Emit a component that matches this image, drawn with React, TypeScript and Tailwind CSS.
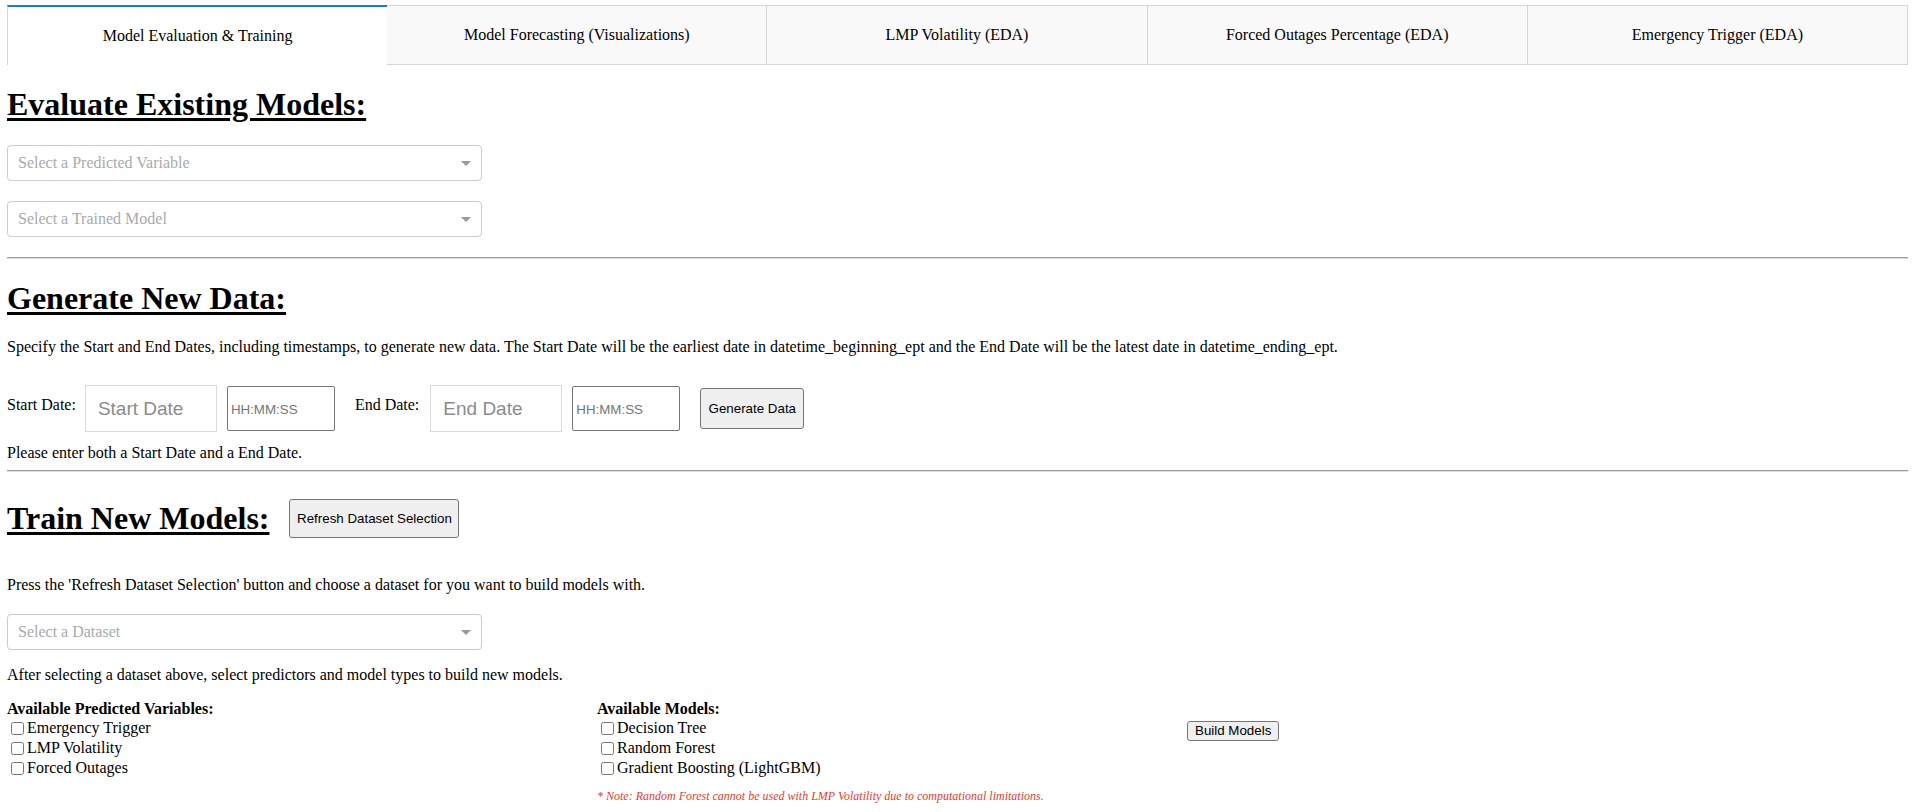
import React, { useState } from 'react';

const tabs = [
  'Model Evaluation & Training',
  'Model Forecasting (Visualizations)',
  'LMP Volatility (EDA)',
  'Forced Outages Percentage (EDA)',
  'Emergency Trigger (EDA)',
];

const serif = { fontFamily: '"Liberation Serif", "Times New Roman", serif' };
const sans = { fontFamily: '"Liberation Sans", Arial, sans-serif' };

const Dropdown = ({ placeholder, className }: { placeholder: string; className: string }) => (
  <div
    className={`w-[475px] h-9 flex items-center border border-[#ccc] rounded-[4px] bg-white ${className}`}
  >
    <span className="flex-grow pl-[10px] text-[16px] leading-[18px] text-[#aaa]">{placeholder}</span>
    <span className="w-[25px] pr-[5px] flex justify-center">
      <span className="w-0 h-0 border-x-[5px] border-x-transparent border-t-[5px] border-t-[#999]" />
    </span>
  </div>
);

const Divider = ({ className }: { className: string }) => (
  <hr className={`h-0 border-t border-b border-t-[#9a9a9a] border-b-[#e0e0e0] ${className}`} />
);

const Check = ({ label }: { label: string }) => (
  <label className="flex items-center h-5 text-[16px] leading-[18px]">
    <input type="checkbox" className="w-[13px] h-[13px] ml-[4px] mr-[3px] my-[3px]" />
    {label}
  </label>
);

const App = () => {
  const [active, setActive] = useState(0);

  return (
    <div className="min-h-screen bg-white text-black px-[7px] pt-[5px]" style={serif}>
      <div className="flex h-[60px]">
        {tabs.map((t, i) => (
          <button
            key={t}
            onClick={() => setActive(i)}
            className={
              i === active
                ? 'flex-1 flex items-center justify-center bg-white border-l border-l-[#d6d6d6] border-t-2 border-t-[#1975fa] text-[16px]'
                : 'flex-1 flex items-center justify-center bg-[#f9f9f9] border border-[#d6d6d6] border-l-0 first:border-l text-[16px]'
            }
            style={serif}
          >
            {t}
          </button>
        ))}
      </div>

      <h1 className="mt-[21px] text-[32px] leading-[37px] font-bold underline decoration-[3px] underline-offset-[3px]">
        Evaluate Existing Models:
      </h1>
      <Dropdown placeholder="Select a Predicted Variable" className="mt-[22px]" />
      <Dropdown placeholder="Select a Trained Model" className="mt-5" />

      <Divider className="mt-5" />

      <h1 className="mt-[21px] text-[32px] leading-[37px] font-bold underline decoration-[3px] underline-offset-[3px]">
        Generate New Data:
      </h1>
      <p className="mt-[21px] text-[16px] leading-[18px]">
        Specify the Start and End Dates, including timestamps, to generate new data. The Start Date will be the
        earliest date in datetime_beginning_ept and the End Date will be the latest date in datetime_ending_ept.
      </p>

      <div className="mt-[29px] flex items-center h-[47px]">
        <span className="text-[16px] leading-[18px] mb-2">Start Date:</span>
        <div className="ml-[9px] w-[132px] h-[47px] border border-[#dbdbdb] bg-white flex items-center pl-[12px] pt-[2px]">
          <span className="text-[19px] text-[#8c8c8c]" style={sans}>
            Start Date
          </span>
        </div>
        <input
          placeholder="HH:MM:SS"
          className="ml-[10px] w-[108px] h-[45px] border border-[#767676] rounded-[2px] px-[3px] pt-[2px] text-[13.33px] placeholder-[#757575]"
          style={sans}
        />
        <span className="ml-5 text-[16px] leading-[18px] mb-2">End Date:</span>
        <div className="ml-[11px] w-[132px] h-[47px] border border-[#dbdbdb] bg-white flex items-center pl-[12px] pt-[2px]">
          <span className="text-[19px] text-[#8c8c8c]" style={sans}>
            End Date
          </span>
        </div>
        <input
          placeholder="HH:MM:SS"
          className="ml-[10px] w-[108px] h-[45px] border border-[#767676] rounded-[2px] px-[3px] pt-[2px] text-[13.33px] placeholder-[#757575]"
          style={sans}
        />
        <button
          className="ml-5 w-[104px] h-[41px] bg-[#efefef] border border-[#767676] rounded-[3px] text-[13.33px]"
          style={sans}
        >
          Generate Data
        </button>
      </div>
      <div className="mt-3 text-[16px] leading-[18px]">Please enter both a Start Date and a End Date.</div>

      <Divider className="mt-2" />

      <div className="mt-[27px] flex items-center">
        <h1 className="text-[32px] leading-[37px] font-bold underline decoration-[3px] underline-offset-[3px]">
          Train New Models:
        </h1>
        <button
          className="ml-5 w-[170px] h-[39px] bg-[#efefef] border border-[#767676] rounded-[3px] text-[13.33px]"
          style={sans}
        >
          Refresh Dataset Selection
        </button>
      </div>
      <p className="mt-[38px] text-[16px] leading-[18px]">
        Press the 'Refresh Dataset Selection' button and choose a dataset for you want to build models with.
      </p>
      <Dropdown placeholder="Select a Dataset" className="mt-5" />
      <p className="mt-4 text-[16px] leading-[18px]">
        After selecting a dataset above, select predictors and model types to build new models.
      </p>

      <div className="mt-4 flex">
        <div className="w-[590px]">
          <div className="text-[16px] leading-[18px] font-bold">Available Predicted Variables:</div>
          <div>
            <Check label="Emergency Trigger" />
            <Check label="LMP Volatility" />
            <Check label="Forced Outages" />
          </div>
        </div>
        <div className="w-[590px]">
          <div className="text-[16px] leading-[18px] font-bold">Available Models:</div>
          <div>
            <Check label="Decision Tree" />
            <Check label="Random Forest" />
            <Check label="Gradient Boosting (LightGBM)" />
          </div>
          <p className="mt-[11px] text-[12px] leading-[14px] italic text-[#ee3a1f]">
            * Note: Random Forest cannot be used with LMP Volatility due to computational limitations.
          </p>
        </div>
        <div>
          <button
            className="mt-[21px] h-5 px-[7px] bg-[#efefef] border border-[#767676] rounded-[3px] text-[13.33px] leading-[16px]"
            style={sans}
          >
            Build Models
          </button>
        </div>
      </div>
    </div>
  );
};

export default App;
